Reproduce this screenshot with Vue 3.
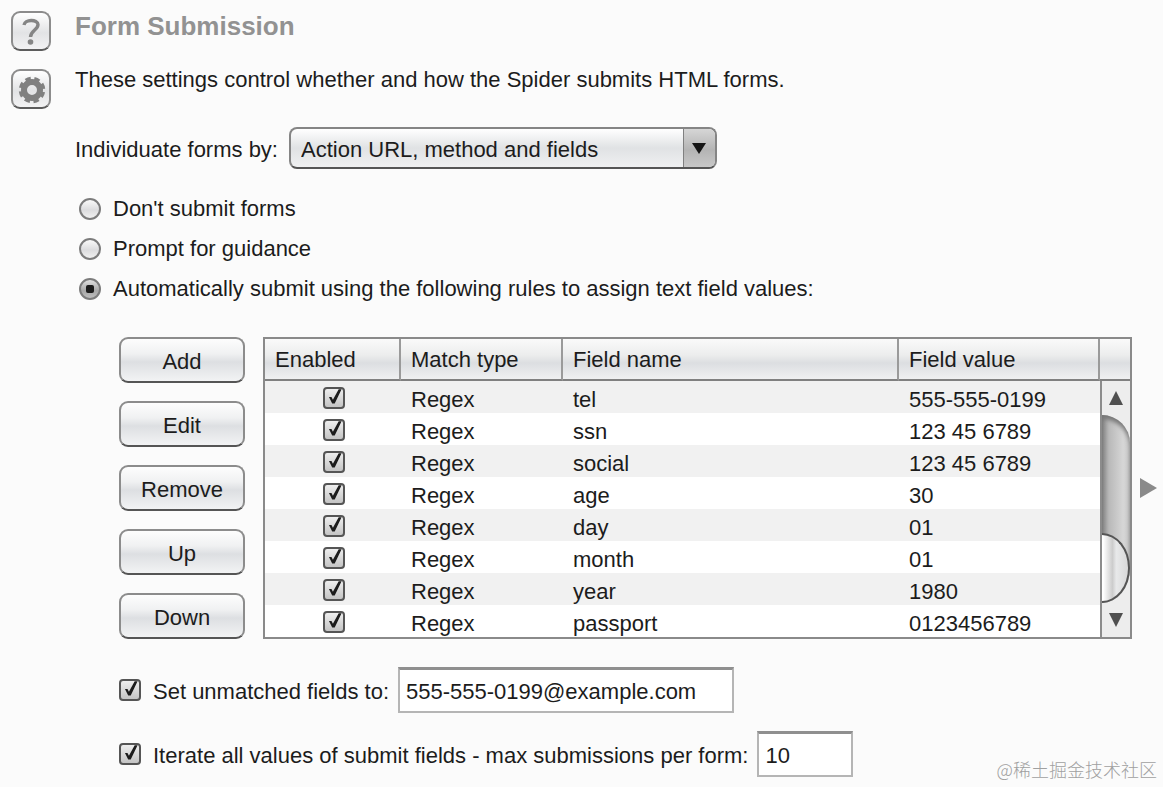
<script setup>
import { ref } from 'vue'

const individuateBy = ref('Action URL, method and fields')
const mode = ref('auto')
const modes = [
  { value: 'none', label: "Don't submit forms" },
  { value: 'prompt', label: 'Prompt for guidance' },
  { value: 'auto', label: 'Automatically submit using the following rules to assign text field values:' },
]
const actions = ['Add', 'Edit', 'Remove', 'Up', 'Down']
const rules = ref([
  { name: 'tel', value: '555-555-0199', enabled: true },
  { name: 'ssn', value: '123 45 6789', enabled: true },
  { name: 'social', value: '123 45 6789', enabled: true },
  { name: 'age', value: '30', enabled: true },
  { name: 'day', value: '01', enabled: true },
  { name: 'month', value: '01', enabled: true },
  { name: 'year', value: '1980', enabled: true },
  { name: 'passport', value: '0123456789', enabled: true },
])
const setUnmatched = ref(true)
const unmatched = ref('555-555-0199@example.com')
const iterateAll = ref(true)
const maxSubmissions = ref('10')
</script>

<template>
  <main class="page">
    <aside class="tools">
      <button class="tool" type="button" aria-label="Help">
        <svg viewBox="0 0 36 36" width="36" height="36" fill="none">
          <path d="M11 12C11.500 6 25 6 25 11.500C25 17 18 17 17.500 24" stroke="#858585" stroke-width="3.400" />
          <circle cx="17.500" cy="29" r="2.800" fill="#858585" />
        </svg>
      </button>
      <button class="tool" type="button" aria-label="Options">
        <svg viewBox="0 0 36 36" width="36" height="36" fill="none">
          <circle cx="19" cy="19" r="8" stroke="#808080" stroke-width="6" />
          <circle cx="19" cy="19" r="11.500" stroke="#808080" stroke-width="3.500" stroke-dasharray="5.400 3.632" stroke-dashoffset="-2" />
        </svg>
      </button>
    </aside>

    <section class="content">
      <h1>Form Submission</h1>
      <p class="intro">These settings control whether and how the Spider submits HTML forms.</p>

      <div class="individuate">
        <label for="individuate">Individuate forms by:</label>
        <span class="select">
          <select id="individuate" v-model="individuateBy">
            <option>Action URL, method and fields</option>
          </select>
          <span class="select-arrow">
            <svg viewBox="0 0 14 11" width="14" height="11"><path d="M0 0H14L7 11Z" fill="#151515" /></svg>
          </span>
        </span>
      </div>

      <div class="modes">
        <label v-for="m in modes" :key="m.value">
          <input v-model="mode" type="radio" name="mode" :value="m.value" />
          <span>{{ m.label }}</span>
        </label>
      </div>

      <div class="rules">
        <div class="actions">
          <button v-for="a in actions" :key="a" type="button">{{ a }}</button>
        </div>
        <div class="grid">
          <table>
            <colgroup>
              <col class="c-enabled" /><col class="c-type" /><col /><col class="c-value" /><col class="c-bar" />
            </colgroup>
            <thead>
              <tr>
                <th>Enabled</th>
                <th>Match type</th>
                <th>Field name</th>
                <th>Field value</th>
                <th></th>
              </tr>
            </thead>
            <tbody>
              <tr v-for="r in rules" :key="r.name">
                <td class="check"><input v-model="r.enabled" type="checkbox" :aria-label="r.name" /></td>
                <td>Regex</td>
                <td>{{ r.name }}</td>
                <td>{{ r.value }}</td>
                <td></td>
              </tr>
            </tbody>
          </table>
          <div class="scrollbar">
            <span class="step"><svg viewBox="0 0 14 14" width="14" height="14"><path d="M7 0L14 14H0Z" fill="#505050" /></svg></span>
            <span class="track"><span class="thumb"></span></span>
            <span class="step"><svg viewBox="0 0 14 14" width="14" height="14"><path d="M0 0H14L7 14Z" fill="#505050" /></svg></span>
          </div>
        </div>
        <button class="expand" type="button" aria-label="Expand">
          <svg viewBox="0 0 17 20" width="17" height="20"><path d="M0 0L17 10L0 20Z" fill="#8a8a8a" /></svg>
        </button>
      </div>

      <div class="extra">
        <label>
          <input v-model="setUnmatched" type="checkbox" />
          <span>Set unmatched fields to:</span>
        </label>
        <input v-model="unmatched" class="text wide" type="text" aria-label="Set unmatched fields to" />
      </div>
      <div class="extra">
        <label>
          <input v-model="iterateAll" type="checkbox" />
          <span>Iterate all values of submit fields - max submissions per form:</span>
        </label>
        <input v-model="maxSubmissions" class="text narrow" type="text" aria-label="Max submissions per form" />
      </div>
    </section>

    <span class="watermark">@稀土掘金技术社区</span>
  </main>
</template>

<style>
body {
  background: #fbfbfb;
}
</style>

<style scoped>
* {
  box-sizing: border-box;
}

.page {
  position: relative;
  display: flex;
  gap: 24px;
  padding: 11px 6px 8px 11px;
  font: 22px/26px "Liberation Sans", Arial, sans-serif;
  color: #1c1c1c;
}

button,
input,
select {
  margin: 0;
  font: inherit;
  color: inherit;
}

.tools {
  display: flex;
  flex: none;
  flex-direction: column;
  gap: 18px;
}

.tool {
  display: grid;
  place-items: center;
  width: 40px;
  height: 40px;
  padding: 0;
  border: 2px solid #8c8c8c;
  border-bottom-color: #5c5c5c;
  border-radius: 9px;
  background: linear-gradient(#fff, #e2e3e5 55%, #f2f2f3);
}

.content {
  flex: 1;
  min-width: 0;
}

h1 {
  margin: 0;
  font-size: 26px;
  line-height: 30px;
  color: #929292;
}

.intro {
  margin: 26px 0 0;
}

.individuate {
  display: flex;
  align-items: center;
  gap: 11px;
  margin-top: 34px;
}

.individuate > label {
  padding-top: 3px;
}

.select {
  position: relative;
  width: 428px;
  height: 42px;
}

.select select {
  width: 100%;
  height: 100%;
  padding: 3px 40px 0 10px;
  appearance: none;
  border: 2px solid #858585;
  border-bottom-color: #555;
  border-radius: 8px;
  background: linear-gradient(#fff, #e0e2e4 50%, #eff0f1);
}

.select-arrow {
  position: absolute;
  top: 2px;
  right: 2px;
  bottom: 2px;
  display: grid;
  place-items: center;
  width: 32px;
  border-left: 1px solid #808080;
  border-radius: 0 6px 6px 0;
  background: linear-gradient(#d6d6d6, #b4b4b4 55%, #c8c8c8);
  pointer-events: none;
}

.modes {
  display: grid;
  justify-items: start;
  gap: 14px;
  margin: 27px 0 0 4px;
}

.modes label {
  display: flex;
  align-items: center;
  gap: 12px;
}

input[type="radio"] {
  display: grid;
  place-items: center;
  width: 22px;
  height: 22px;
  appearance: none;
  border: 2px solid #7c7c7c;
  border-radius: 50%;
  background: linear-gradient(#fafafa, #dcdcde 55%, #f0f0f0);
}

input[type="radio"]:checked {
  background: linear-gradient(#e0e0e0, #a8a8a8 60%, #bdbdbd);
}

input[type="radio"]:checked::before {
  width: 8px;
  height: 8px;
  border-radius: 2px;
  background: #1c1c1c;
  content: "";
}

input[type="checkbox"] {
  display: block;
  flex: none;
  width: 22px;
  height: 22px;
  appearance: none;
  border: 2px solid #555;
  border-radius: 4px;
  background: linear-gradient(#eee, #c4c4c4);
}

input[type="checkbox"]:checked::before {
  display: block;
  width: 18px;
  height: 18px;
  background: #1c1c1c;
  clip-path: polygon(22% 44%, 36% 44%, 44% 60%, 76% 2%, 92% 2%, 54% 80%, 40% 80%);
  content: "";
}

.rules {
  display: flex;
  align-items: flex-start;
  margin: 35px 0 0 44px;
}

.actions {
  display: grid;
  flex: none;
  gap: 18px;
  margin-right: 18px;
}

.actions button {
  width: 126px;
  height: 46px;
  padding: 3px 0 0;
  border: 2px solid #8c8c8c;
  border-bottom-color: #555;
  border-radius: 9px;
  background: linear-gradient(#fdfdfd, #f0f1f2 35%, #dddfe2 55%, #f2f3f4);
}

.grid {
  position: relative;
  flex: 1;
  min-width: 0;
  border: 2px solid #8a8a8a;
  background: #fff;
}

table {
  width: 100%;
  table-layout: fixed;
  border-collapse: separate;
  border-spacing: 0;
}

.c-enabled {
  width: 136px;
}

.c-type {
  width: 162px;
}

.c-value {
  width: 201px;
}

.c-bar {
  width: 30px;
}

th {
  height: 42px;
  padding: 2px 0 0 10px;
  border-right: 2px solid #9a9a9a;
  border-bottom: 2px solid #808080;
  background: linear-gradient(#fafafa, #eceded 40%, #dcdee1 60%, #eff0f1);
  font-weight: 400;
  text-align: left;
}

th:last-child {
  padding: 0;
  border-right: 0;
}

td {
  height: 32px;
  padding: 5px 0 0 10px;
}

td:last-child {
  padding: 0;
}

td.check {
  padding: 2px 0 0 58px;
}

tbody tr:nth-child(odd) {
  background: #f1f1f1;
}

.scrollbar {
  position: absolute;
  top: 42px;
  right: 0;
  bottom: 0;
  display: flex;
  flex-direction: column;
  width: 30px;
  border-left: 2px solid #8c8c8c;
  background: #ededed;
}

.step {
  display: grid;
  flex: none;
  place-items: center;
  height: 34px;
}

.track {
  display: flex;
  flex: 1;
  align-items: flex-end;
  border-radius: 0 28px 28px 0 / 0 28px 35px 0;
  background: linear-gradient(90deg, #858585, #b9b9b9 25%, #d6d6d6 75%, #ccc);
  box-shadow: inset 0 4px 4px #777;
}

.thumb {
  width: 28px;
  height: 70px;
  border: 2px solid #555;
  border-left: 0;
  border-radius: 0 28px 28px 0 / 0 35px 35px 0;
  background: linear-gradient(90deg, #fff 5%, #ccc 40%, #e8e9ea 55%, #d8d8d8);
}

.expand {
  display: flex;
  align-self: center;
  flex: none;
  margin-left: 8px;
  padding: 0;
  border: 0;
  background: none;
}

.extra {
  display: flex;
  align-items: center;
  gap: 9px;
  margin: 18px 0 0 44px;
}

.rules + .extra {
  margin-top: 28px;
}

.extra label {
  display: flex;
  align-items: center;
  gap: 12px;
}

.extra label span {
  padding-top: 3px;
}

.text {
  height: 46px;
  padding: 2px 6px 0;
  border: 2px solid #b5b5b5;
  border-top: 3px solid #8f8f8f;
  border-radius: 0;
  background: #fff;
}

.wide {
  width: 336px;
}

.narrow {
  width: 96px;
}

.watermark {
  position: absolute;
  right: 6px;
  bottom: 4px;
  font: 18px/24px "Noto Sans CJK SC", sans-serif;
  font-weight: 300;
  color: #a0a0a0;
}
</style>
